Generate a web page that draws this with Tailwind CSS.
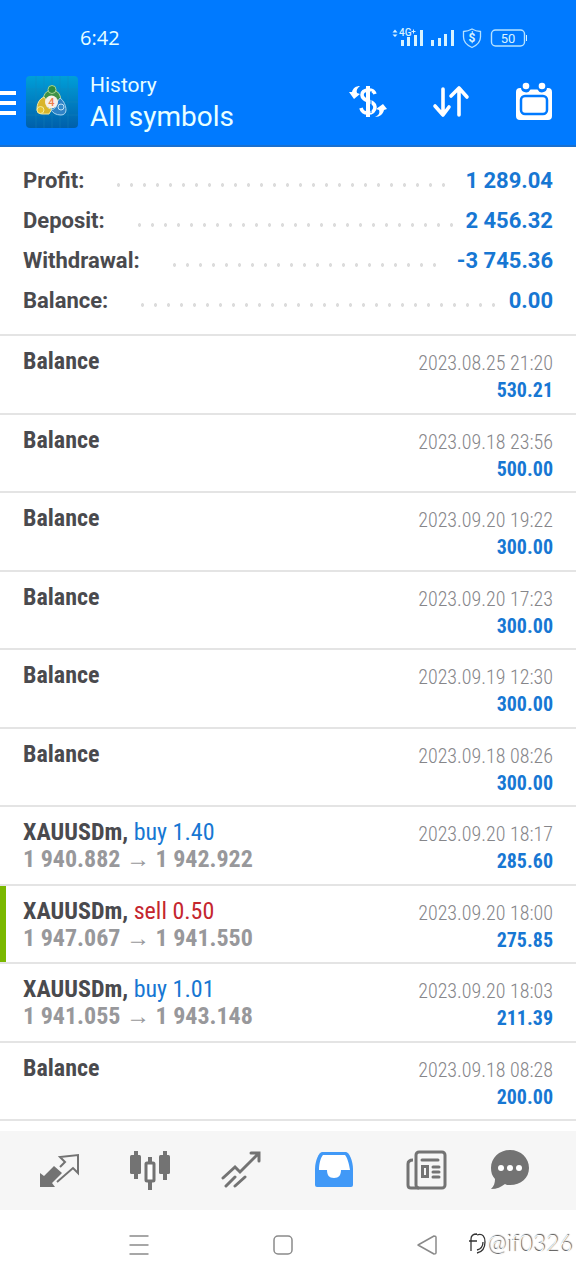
<!DOCTYPE html>
<html lang="en">
<head>
    <meta charset="UTF-8">
    <meta name="viewport" content="width=device-width, initial-scale=1.0">
    <title>History - All symbols</title>
    <script src="https://cdn.jsdelivr.net/npm/@tailwindcss/browser@4"></script>
</head>
<body class="flex min-h-screen flex-col bg-white font-['Roboto',sans-serif] text-[#4a4a4e]">

    <header class="border-b-2 border-[#1a70cf] bg-[#007aff] text-[#e8ffff]">
        <!-- Status bar -->
        <div class="flex h-[68px] items-center justify-between pt-2 pr-12 pl-20">
            <time class="font-['Open_Sans',sans-serif] text-[20px]">6:42</time>
            <svg class="h-6 w-[136px]" viewBox="0 0 136 24" fill="none" aria-hidden="true">
                <g fill="#d8f3ff">
                    <path d="M0.500 6.500 3 3.500l2.500 3zM0.500 8.500h5L3 11z"/>
                    <text x="7" y="10" font-family="Roboto" font-size="10" font-weight="500">4G</text>
                    <path d="M19.500 5.500h4M21.500 3.500v4" stroke="#d8f3ff"/>
                    <path d="M9 14h3v6H9zM15 11h3v9h-3zM22 9h3v11h-3zM28 4h3v16h-3z"/>
                    <path d="M39 14h3v6h-3zM46 12h3v8h-3zM52 8h3v12h-3zM59 4h3v16h-3z"/>
                    <text x="80" y="16" text-anchor="middle" font-family="Roboto" font-size="12" font-weight="700">$</text>
                    <text x="116" y="17" text-anchor="middle" font-family="Roboto" font-size="13">50</text>
                    <path d="M134 9h1v6h-1z"/>
                </g>
                <path d="M80 3c3 1.800 5 2.300 8.500 2.500V11c0 5-3 8-8.500 10.500C74.500 19 71.500 16 71.500 11V5.500C75 5.300 77 4.800 80 3z" stroke="#b5e2ff" stroke-width="1.300"/>
                <rect x="99.500" y="4" width="33" height="16" rx="4" stroke="#b5e2ff" stroke-width="1.400"/>
            </svg>
        </div>

        <!-- Toolbar -->
        <div class="flex h-[77px] items-start pr-[22px]">
            <button type="button" aria-label="Menu" class="mt-[23px] flex w-4 flex-col gap-[6px]">
                <span class="h-1 w-full bg-white"></span>
                <span class="h-1 w-full bg-white"></span>
                <span class="h-1 w-full bg-white"></span>
            </button>
            <svg class="mt-2 ml-[10px] size-[52px]" viewBox="0 0 52 52" aria-hidden="true">
                <defs>
                    <linearGradient id="sky" x1="0" y1="0" x2="0" y2="1">
                        <stop offset="0" stop-color="#009fd8"/>
                        <stop offset="1" stop-color="#005faa"/>
                    </linearGradient>
                </defs>
                <rect width="52" height="52" rx="4" fill="url(#sky)"/>
                <path d="M10 0v52M18 0v52M26 0v52M34 0v52M42 0v52M0 13h52M0 26h52M0 39h52" stroke="#1b86bd" stroke-width="0.600" opacity="0.600"/>
                <g stroke-width="1">
                    <path d="M17 26c0-7 3-12 9-12s9 5 9 12l-4 1c-1-4-9-4-10 0z" fill="#3f9147" stroke="#b9d896"/>
                    <path d="M18 21c-5 2-7 7-7 12 0 3 2 5 5 5h7l3-5c-5 0-7-4-5-8z" fill="#d9b52b" stroke="#f1e8a2"/>
                    <path d="M34 22c4 3 6 8 6 12 0 3-2 5-5 5-5 0-8-2-10-5 4-1 6-3 6-8z" fill="#2f82c6" stroke="#a5d4ef"/>
                    <circle cx="26" cy="13.500" r="4" fill="#2f8a40" stroke="#a8d491"/>
                    <circle cx="14.500" cy="34" r="3.500" fill="#e5c231" stroke="#f3ec9f"/>
                    <circle cx="35" cy="31" r="3" fill="#348acb" stroke="#bfe4f6"/>
                </g>
                <circle cx="25.500" cy="26" r="6.500" fill="#f8efe6"/>
                <text x="25.500" y="30" text-anchor="middle" font-family="Roboto" font-size="11" font-weight="500" fill="#ee7d4a">4</text>
            </svg>
            <div class="ml-3 flex-1 pt-1">
                <p class="text-[21px] leading-[26px]">History</p>
                <h1 class="text-[28px] leading-[38px]">All symbols</h1>
            </div>
            <div class="mt-[14px] flex items-center gap-[43px] text-white">
                <button type="button" aria-label="Currency">
                    <svg class="size-10" viewBox="0 0 40 40" fill="none" stroke="currentColor">
                        <path d="M27 12c-1-3-3-4-6-4-5 0-7 2-7 5 0 7 13 5 13 12 0 4-3 6-7 6s-6-1-7-5" stroke-width="3.600"/>
                        <path d="M20 4v31" stroke-width="4"/>
                        <path d="M23 9v22" stroke="#007aff" stroke-width="1"/>
                        <path d="M1 10l3 0C5 6 8 4 12 4c-3 2-4 5-3 7l3 1-6 5z" fill="currentColor" stroke="none"/>
                        <path d="M39 27l-3 1c-1 4-4 7-9 7 4-2 5-4 4-7l-3-1 7-5z" fill="currentColor" stroke="none"/>
                    </svg>
                </button>
                <button type="button" aria-label="Sort">
                    <svg class="size-10" viewBox="0 0 40 40" fill="none" stroke="currentColor" stroke-width="3.600" stroke-linecap="round" stroke-linejoin="round">
                        <path d="M12 7v26M4 24l8 9 6-8M28 33V7M20 14l8-8 8 9"/>
                    </svg>
                </button>
                <button type="button" aria-label="Period">
                    <svg class="size-10" viewBox="0 0 40 40" fill="currentColor">
                        <path d="M6 6h1a5 5 0 0 0 9.500 1.500h7A5 5 0 0 0 33 6h1a4 4 0 0 1 4 4v24a4 4 0 0 1-4 4H6a4 4 0 0 1-4-4V10a4 4 0 0 1 4-4z"/>
                        <circle cx="12" cy="4" r="3.300"/>
                        <circle cx="28" cy="4" r="3.300"/>
                        <rect x="7" y="14" width="26" height="18" rx="4" stroke="#007aff" stroke-width="2.500"/>
                    </svg>
                </button>
            </div>
        </div>
    </header>

    <main class="flex flex-1 flex-col">
        <dl id="summary" class="border-b-2 border-[#e4e4e4] px-[23px] pt-[14px] pb-[13px] text-[22px] leading-[40px] font-bold"></dl>
        <ul id="history" class="flex flex-1 flex-col pb-[10px] font-['Roboto_Condensed','Liberation_Sans_Narrow','Roboto',sans-serif]"></ul>
    </main>

    <nav class="flex h-[79px] items-center justify-between bg-[#f6f6f6] pr-11 pl-9 text-[#737373]">
        <a href="#quotes" aria-label="Quotes">
            <svg class="size-11" viewBox="0 0 44 44">
                <path d="M4 24l4 3 10-10 8 7-10 10 3 4H4z" fill="currentColor"/>
                <path d="M25 17l4-4-5-5 18-2v18l-5-5-16 14M24 18l4-4" fill="none" stroke="currentColor" stroke-width="2"/>
            </svg>
        </a>
        <a href="#charts" aria-label="Charts">
            <svg class="size-11" viewBox="0 0 44 44" fill="currentColor">
                <path d="M6 2h4v28H6zM35 2h4v29h-4zM20 8h4v8h-4zM20 33h4v8h-4z"/>
                <rect x="2" y="6" width="11" height="19" rx="1.500"/>
                <rect x="31" y="6" width="11" height="19" rx="1.500"/>
                <rect x="18" y="14" width="8" height="18" rx="1" fill="#fff" stroke="currentColor" stroke-width="3"/>
            </svg>
        </a>
        <a href="#trade" aria-label="Trade">
            <svg class="size-11" viewBox="0 0 44 44" fill="none" stroke="currentColor" stroke-width="3" stroke-linecap="round">
                <path d="M3 29l12-11 5 5L38 5M31 4h8v8M6 37l9-9M15 37l10-9"/>
            </svg>
        </a>
        <a href="#history" aria-label="History" aria-current="page" class="text-[#4199f7]">
            <svg class="size-11" viewBox="0 0 44 44" fill="currentColor">
                <path d="M10 3h24c3 0 7 9 7 17v16a2 2 0 0 1-2 2H5a2 2 0 0 1-2-2V20C3 12 7 3 10 3z"/>
                <path d="M11 6h22c2 2 4 8 5 15H29c0 5-2 8-7 8s-7-3-7-8H7c0-7 2-13 4-15z" fill="#fff"/>
            </svg>
        </a>
        <a href="#news" aria-label="News">
            <svg class="size-11" viewBox="0 0 44 44" fill="none" stroke="currentColor" stroke-width="3">
                <rect x="12" y="3" width="29" height="36" rx="3"/>
                <path d="M9 11c-3 0-5 1-5 4v21c0 2 1 3 3 3h8"/>
                <path d="M18 11h16M29 18h6M29 23h6M29 28h6" stroke-linecap="round"/>
                <path d="M18.500 17.500h5v10h-5z"/>
            </svg>
        </a>
        <a href="#messages" aria-label="Messages" class="-ml-2">
            <svg class="size-11" viewBox="0 0 44 44">
                <path d="M22 1c11 0 19 8 19 18s-8 17-19 17c-2 0-4 0-5-1-4 3-8 5-14 5 3-3 4-6 4-10-3-3-4-7-4-11C3 9 11 1 22 1z" fill="currentColor"/>
                <g fill="#fff"><circle cx="13" cy="19" r="3"/><circle cx="22" cy="19" r="3"/><circle cx="31" cy="19" r="3"/></g>
            </svg>
        </a>
    </nav>

    <!-- System navigation -->
    <footer class="relative flex h-[70px] items-center justify-around pr-[77px] pl-[67px]">
        <button type="button" aria-label="Recent apps">
            <svg class="size-6" viewBox="0 0 24 24" fill="none" stroke="#8a8a8a" stroke-width="1.500"><path d="M2.500 3h19M2.500 12h19M2.500 21h19"/></svg>
        </button>
        <button type="button" aria-label="Home">
            <svg class="size-6" viewBox="0 0 24 24" fill="none" stroke="#8a8a8a" stroke-width="1.500"><rect x="3" y="3" width="18" height="18" rx="4"/></svg>
        </button>
        <button type="button" aria-label="Back">
            <svg class="size-6" viewBox="0 0 24 24" fill="none" stroke="#8a8a8a" stroke-width="1.500" stroke-linejoin="round"><path d="M3 12 19 3q2 0 2 1v16q0 1-2 1z"/></svg>
        </button>
        <p class="absolute top-[16px] right-1 flex items-center font-['Lato',sans-serif] text-[23px] leading-[34px] font-light text-white [text-shadow:1px_-1px_1px_#444]">
            <svg class="h-6 w-5" viewBox="0 0 20 24" fill="none" stroke="#333" stroke-width="1.300">
                <path d="M2 10h8M4 20V8c0-4 3-5 6-5M10 4c6-2 8 2 8 7 0 6-3 10-8 11M10 19c4-1 6-4 6-8"/>
            </svg>@if0326
        </p>
    </footer>

    <script>
        const summary = [
            ['Profit:', '1 289.04', 'ml-7 mr-4'],
            ['Deposit:', '2 456.32', 'ml-7 mr-3'],
            ['Withdrawal:', '-3 745.36', 'ml-7 mr-4'],
            ['Balance:', '0.00', 'ml-7 mr-3']
        ];

        const history = [
            { date: '2023.08.25 21:20', amount: '530.21' },
            { date: '2023.09.18 23:56', amount: '500.00' },
            { date: '2023.09.20 19:22', amount: '300.00' },
            { date: '2023.09.20 17:23', amount: '300.00' },
            { date: '2023.09.19 12:30', amount: '300.00' },
            { date: '2023.09.18 08:26', amount: '300.00' },
            { side: 'buy', lots: '1.40', open: '1 940.882', close: '1 942.922', date: '2023.09.20 18:17', amount: '285.60' },
            { side: 'sell', lots: '0.50', open: '1 947.067', close: '1 941.550', date: '2023.09.20 18:00', amount: '275.85', marked: true },
            { side: 'buy', lots: '1.01', open: '1 941.055', close: '1 943.148', date: '2023.09.20 18:03', amount: '211.39' },
            { date: '2023.09.18 08:28', amount: '200.00' }
        ];

        document.getElementById('summary').innerHTML = summary.map(([label, value, margin]) => `
            <div class="flex items-center">
                <dt>${label}</dt>
                <dd class="flex flex-1 items-center">
                    <span class="${margin} mt-2 h-1 flex-1 bg-[radial-gradient(circle,#dcdcdc_1.5px,transparent_2px)] bg-[length:13px_4px]"></span>
                    <span class="text-[#1777d3]">${value}</span>
                </dd>
            </div>
        `).join('');

        // A row is either a deal (has a side) or a balance operation
        document.getElementById('history').innerHTML = history.map(row => `
            <li class="flex flex-1 items-start justify-between border-b-2 border-[#e4e4e4] px-[23px] pt-3 ${row.marked ? 'shadow-[inset_6px_0_#7ab800]' : ''}">
                <div class="text-[24px] leading-[27px] font-bold">
                    ${row.side ? `
                        <p>XAUUSDm, <span class="font-normal ${row.side === 'buy' ? 'text-[#1777d3]' : 'text-[#c4262e]'}">${row.side} ${row.lots}</span></p>
                        <p class="text-[#98989b]">${row.open} <span class="font-normal">→</span> ${row.close}</p>
                    ` : '<p>Balance</p>'}
                </div>
                <div class="pt-[2px] text-right text-[20px] leading-[27px]">
                    <p class="font-light text-[#86868a]">${row.date}</p>
                    <p class="font-bold text-[#1777d3]">${row.amount}</p>
                </div>
            </li>
        `).join('');
    </script>
</body>
</html>
